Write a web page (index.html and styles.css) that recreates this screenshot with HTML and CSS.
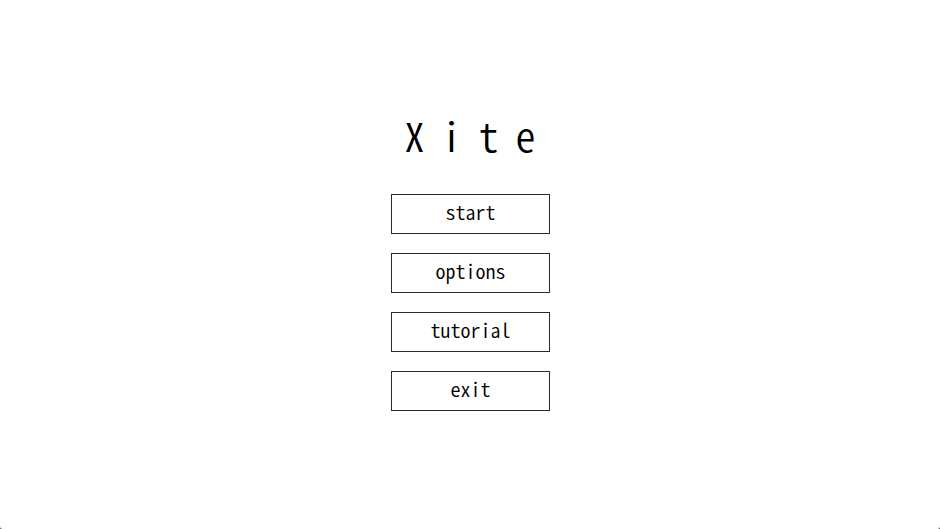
FILE: index.html
```html
<!DOCTYPE html>
<html lang="ja">
<head>
<meta charset="utf-8">
<title>Xite</title>
<link rel="stylesheet" href="styles.css">
</head>
<body>
<main class="menu">
  <h1 class="title">Xite</h1>
  <nav class="buttons">
    <button class="btn">start</button>
    <button class="btn">options</button>
    <button class="btn">tutorial</button>
    <button class="btn">exit</button>
  </nav>
</main>
</body>
</html>
```
FILE: styles.css
```css
html {
  margin: 0;
  height: 100%;
  background: #6b6b6b;
}
body {
  margin: 0;
  height: 100%;
  background: #ffffff;
  border-radius: 0 0 3px 3px;
  font-family: "Noto Sans CJK JP", "DejaVu Sans Mono", monospace;
  font-feature-settings: "hwid" 1;
  color: #000;
}
.menu {
  height: 100%;
  display: flex;
  flex-direction: column;
  align-items: center;
  justify-content: center;
  padding-bottom: 8px;
  box-sizing: border-box;
}
.title {
  margin: 0 -17px 34px 0;
  font-weight: 350;
  font-size: 40px;
  line-height: 50px;
  letter-spacing: 17px;
}
.buttons {
  display: flex;
  flex-direction: column;
  gap: 19px;
}
.btn {
  width: 159px;
  height: 40px;
  box-sizing: border-box;
  border: 1px solid #2a2a2a;
  background: #fff;
  font-family: inherit;
  font-feature-settings: "hwid" 1;
  font-weight: 350;
  font-size: 20px;
  line-height: 24px;
  color: #000;
  padding: 0 0 4px 1px;
  letter-spacing: 0;
  cursor: pointer;
}
```
